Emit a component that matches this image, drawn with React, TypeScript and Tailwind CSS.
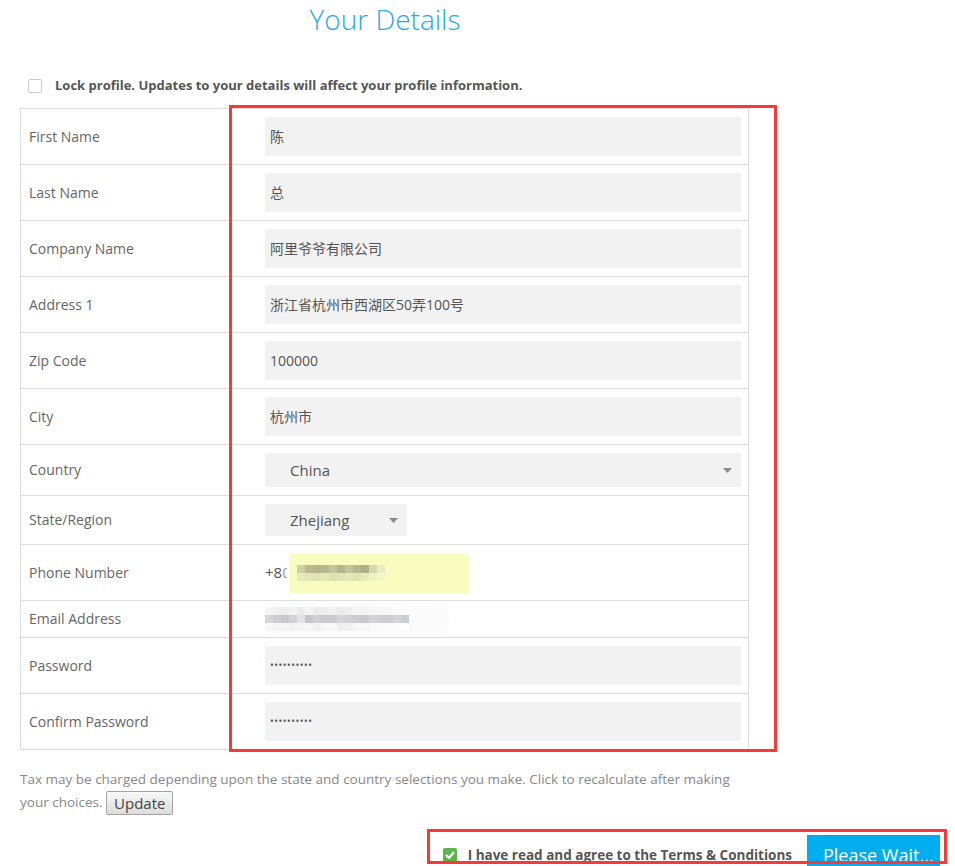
import React from "react";

type Row = { label: string; kind: "text" | "country" | "state" | "phone" | "email" | "password"; value?: string };

const rows: Row[] = [
  { label: "First Name", kind: "text", value: "陈" },
  { label: "Last Name", kind: "text", value: "总" },
  { label: "Company Name", kind: "text", value: "阿里爷爷有限公司" },
  { label: "Address 1", kind: "text", value: "浙江省杭州市西湖区50弄100号" },
  { label: "Zip Code", kind: "text", value: "100000" },
  { label: "City", kind: "text", value: "杭州市" },
  { label: "Country", kind: "country", value: "China" },
  { label: "State/Region", kind: "state", value: "Zhejiang" },
  { label: "Phone Number", kind: "phone" },
  { label: "Email Address", kind: "email" },
  { label: "Password", kind: "password" },
  { label: "Confirm Password", kind: "password" },
];

const phoneTop = ["#cfd0a6", "#b9ba90", "#b3b58d", "#b5b88e", "#c3c69d", "#b2b48c", "#c1c49b", "#b5b78e", "#aeb088", "#d6d9ae", "#e9ecc0"];
const phoneBot = ["#e6e9ba", "#e2e5b6", "#dfe2b3", "#e4e7b8", "#dde0b1", "#e1e4b5", "#e5e8b9", "#e0e3b4", "#e9ecbd", "#eef1c2", "#f2f5c4"];

const mailTop = ["#f4f4f4", "#f0f0f0", "#eeeeee", "#f2f2f2", "#ececec", "#f3f3f3", "#eaeaea", "#efefef", "#f1f1f1", "#ebebeb", "#f0f0f0", "#f5f5f5", "#f4f4f4", "#f6f6f6", "#f7f7f7", "#f8f8f8", "#fafafa", "#fbfbfb"];
const mailMid = ["#d6d5d8", "#cfcdd1", "#c8c8cc", "#d3d2d5", "#e2e2e4", "#c9c6c9", "#d0cfd2", "#cbcacd", "#ccccce", "#d6d6d8", "#d2d0d4", "#cdcdcf", "#c8cad0", "#d4d4d6", "#cfcfd2", "#ccced2", "#d6d6d9", "#c9ccd4"];
const mailBot = ["#f6f6f6", "#f3f3f3", "#f5f5f5", "#f2f2f2", "#f4f4f4", "#f7f7f7", "#f1f1f1", "#f6f6f6", "#f8f8f8", "#eeeeee", "#f0f0f0", "#f6f6f6", "#f8f8f8", "#fafafa", "#fbfbfb", "#fcfcfc", "#fdfdfd", "#fefefe"];

function Arrow() {
  return (
    <svg width="9" height="5" viewBox="0 0 9 5" className="shrink-0">
      <path d="M0 0 H9 L4.5 5 Z" fill="#8a8a8a" />
    </svg>
  );
}

function Blocks({ colors }: { colors: string[] }) {
  return (
    <div className="flex">
      {colors.map((c, i) => (
        <div key={i} className="w-[8px] h-[8px]" style={{ background: c }} />
      ))}
    </div>
  );
}

function Value({ row }: { row: Row }) {
  switch (row.kind) {
    case "text":
      return (
        <div className="h-[39px] w-full bg-[#f2f2f2] pl-[5px] flex items-center text-[14px] text-[#555]">
          {row.value}
        </div>
      );
    case "country":
      return (
        <div className="h-[34px] w-full bg-[#f2f2f2] pl-[25px] pr-[9px] flex items-center justify-between text-[15px] text-[#555]">
          <span>{row.value}</span>
          <Arrow />
        </div>
      );
    case "state":
      return (
        <div className="h-[32px] w-[142px] bg-[#f2f2f2] pl-[25px] pr-[9px] flex items-center justify-between text-[15px] text-[#555]">
          <span>{row.value}</span>
          <Arrow />
        </div>
      );
    case "phone":
      return (
        <div className="flex items-center h-[40px] text-[15px] text-[#555]">
          <span>+8</span>
          <span className="inline-block w-[5px] overflow-hidden text-[#9a9a9a]">0</span>
          <div className="ml-[2px] h-[40px] w-[180px] bg-[#f8fcbe] flex flex-col justify-center pl-[8px]">
            <Blocks colors={phoneTop} />
            <Blocks colors={phoneBot} />
          </div>
        </div>
      );
    case "email":
      return (
        <div className="h-[32px] w-[184px] rounded-[14px] bg-[#fbfbfb] flex flex-col justify-center">
          <Blocks colors={mailTop} />
          <Blocks colors={mailMid} />
          <Blocks colors={mailBot} />
        </div>
      );
    case "password":
      return (
        <div className="h-[39px] w-full bg-[#f2f2f2] pl-[5px] flex items-center text-[10px] tracking-[0.5px] text-[#555]">
          ••••••••••
        </div>
      );
  }
}

function rowPad(kind: Row["kind"]) {
  switch (kind) {
    case "phone":
      return "h-[55px] items-center";
    case "email":
      return "h-[36px] items-center";
    default:
      return "py-[8px] items-center";
  }
}

export default function App() {
  return (
    <div className="relative w-[955px] h-[866px] overflow-hidden bg-white font-['Open_Sans','Noto_Sans_CJK_SC',sans-serif]">
      <div className="pl-[20px] w-[760px]">
        <h1 className="w-[730px] text-center text-[28px] leading-[38px] font-light text-[#29a9e1]">Your Details</h1>

        <div className="mt-[38px] h-[20px] pl-[8px] flex items-center gap-[13px]">
          <div className="w-[14px] h-[14px] border border-[#ccc] rounded-[2px] bg-white" />
          <span className="text-[13px] font-bold text-[#555]">
            Lock profile. Updates to your details will affect your profile information.
          </span>
        </div>

        <div className="mt-[12px] w-[729px] border border-[#ddd]">
          {rows.map((row, i) => (
            <div
              key={row.label}
              className={`flex ${i < rows.length - 1 ? "border-b border-[#ddd]" : ""}`}
            >
              <div className="w-[211px] shrink-0 border-r border-[#ddd] pl-[8px] pb-[1px] flex items-center text-[14px] text-[#666]">
                {row.label}
              </div>
              <div className={`flex-1 flex pl-[33px] pr-[7px] ${rowPad(row.kind)}`}>
                <Value row={row} />
              </div>
            </div>
          ))}
        </div>

        <p className="mt-[18px] w-[740px] text-[13.5px] leading-[23px] text-[#888]">
          Tax may be charged depending upon the state and country selections you make. Click to recalculate after making
          your choices.{" "}
          <button className="inline-block align-middle h-[24px] px-[7px] leading-[20px] text-[15px] text-[#444] border border-[#a3a3a3] rounded-[2px] bg-gradient-to-b from-[#f8f8f8] to-[#dcdcdc]">
            Update
          </button>
        </p>
      </div>

      <div className="mt-[20px] flex items-center justify-end pr-[15px]">
        <div className="w-[14px] h-[14px] rounded-[2px] bg-[#5db44a] flex items-center justify-center">
          <svg width="10" height="8" viewBox="0 0 10 8">
            <path d="M1 4 L4 7 L9 1" stroke="white" strokeWidth="2.2" fill="none" />
          </svg>
        </div>
        <span className="ml-[11px] text-[13.5px] font-bold text-[#555] leading-[20px]">
          I have read and agree to the Terms &amp; Conditions
        </span>
        <button className="ml-[15px] w-[133px] h-[40px] bg-[#00adef] text-white text-[18px] leading-[40px] text-left pl-[16px]">
          Please Wait...
        </button>
      </div>

      <div className="absolute left-[229px] top-[105px] w-[548px] h-[647px] border-[3px] border-[#f63a3a] pointer-events-none" />
      <div className="absolute left-[427px] top-[829px] w-[520px] h-[35px] border-[3px] border-[#f63a3a] pointer-events-none" />
    </div>
  );
}
